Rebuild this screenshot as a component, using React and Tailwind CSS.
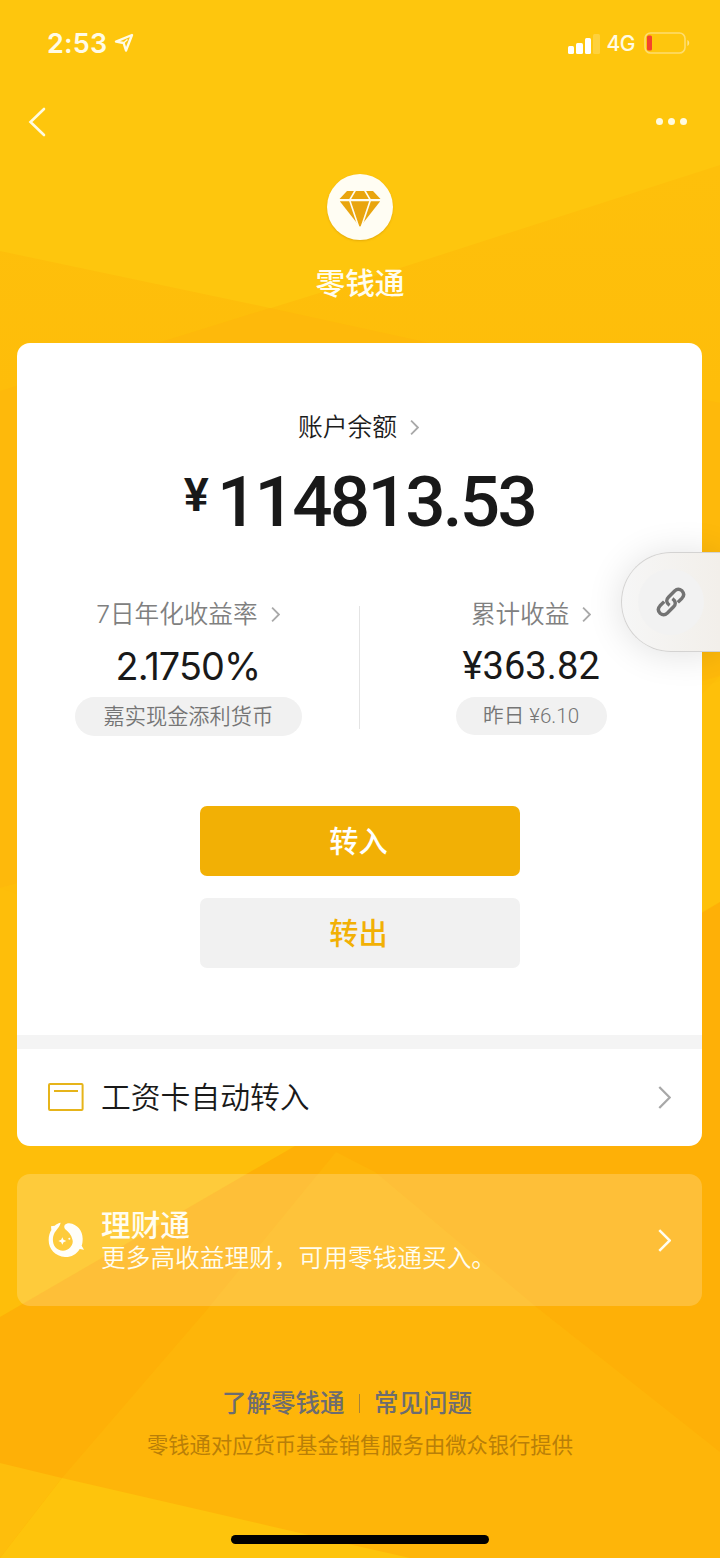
const LATIN = "font-['Inter','Noto_Sans_CJK_SC',sans-serif]";

function Chevron({ className, strokeWidth = 2 }) {
  return (
    <svg viewBox="0 0 12 22" fill="none" stroke="currentColor" strokeWidth={strokeWidth} className={className}>
      <path d="M1 1l10 10L1 21" />
    </svg>
  );
}

function Background() {
  return (
    <svg viewBox="0 0 720 1558" className="absolute inset-0 -z-10 h-full w-full">
      <defs>
        <linearGradient id="facet" gradientUnits="userSpaceOnUse" x1="0" y1="170" x2="0" y2="390">
          <stop offset="0" stopColor="#fec00b" />
          <stop offset="1" stopColor="#febd0a" />
        </linearGradient>
      </defs>
      <rect width="720" height="1558" fill="#fec60d" />
      <path d="M720 165L400 268L180 336L0 391V1558H720z" fill="url(#facet)" />
      <path d="M0 251L270 308L430 343L720 403V690L0 888z" fill="url(#facet)" />
      <path d="M270 308L430 343L720 403V676L0 888V391L180 336z" fill="#feb90b" />
      <path d="M720 676L690 706V918L720 902z" fill="#fec00a" />
      <path d="M0 888L40 902V1340H0z" fill="#febe0a" />
      <path d="M0 1317L295 1146H340V1040H0z" fill="#febe0a" />
      <path d="M720 902L640 950L295 1146L0 1317V1558H720z" fill="#feb007" />
      <path d="M336 1152L205 1312L62 1478L0 1558H720V1452L535 1306L375 1172z" fill="#feb509" />
      <path d="M0 1463L62 1478L0 1558z" fill="#febe0c" />
      <path d="M62 1478L300 1533L410 1558H0z" fill="#fec40c" />
    </svg>
  );
}

function StatusBar() {
  return (
    <div className="flex h-[86px] items-center justify-between pr-[30px] pl-[47px] text-[#fffbe6]">
      <div className="flex items-center gap-[7px]">
        <span className="text-[27px] leading-none font-semibold tracking-[0.2px]">2:53</span>
        <svg viewBox="0 0 20 20" fill="none" stroke="currentColor" strokeWidth="2.4" strokeLinejoin="round" className="h-[20px] w-[20px]">
          <path d="M18 2L2 8.6L9.6 10L12 17.5z" />
          <path d="M9.6 10L13.5 6.5" strokeWidth="1.4" />
        </svg>
      </div>
      <div className="flex items-center">
        <div className="mt-[1px] flex h-[20px] items-end gap-[2px]">
          <span className="h-[8px] w-[6.5px] rounded-[1.5px] bg-white" />
          <span className="h-[11px] w-[6.5px] rounded-[1.5px] bg-white" />
          <span className="h-[16px] w-[6.5px] rounded-[1.5px] bg-white" />
          <span className="h-[20px] w-[6.5px] rounded-[1.5px] bg-white/20" />
        </div>
        <span className="ml-[7px] text-[21px] leading-none font-medium tracking-[-0.5px]">4G</span>
        <svg viewBox="0 0 46 22" fill="none" className="ml-[9px] h-[22px] w-[46px]">
          <rect x="1" y="1" width="40" height="20" rx="5.5" stroke="#fff" strokeOpacity="0.4" strokeWidth="1.6" />
          <rect x="3" y="3.5" width="5" height="15" rx="1.5" fill="#f4432c" />
          <path d="M43.4 8v6c2.4-1 2.4-5 0-6z" fill="#fff" fillOpacity="0.5" />
        </svg>
      </div>
    </div>
  );
}

function NavBar() {
  return (
    <div className="flex h-[72px] items-center justify-between pr-[33px] pl-[28px] text-[#fffbe0]">
      <svg viewBox="0 0 18 30" fill="none" stroke="currentColor" strokeWidth="2.6" strokeLinecap="round" className="h-[30px] w-[18px]">
        <path d="M16 2L2.5 15L16 28" />
      </svg>
      <div className="mb-[1px] flex gap-[5px]">
        <span className="h-[7px] w-[7px] rounded-full bg-current" />
        <span className="h-[7px] w-[7px] rounded-full bg-current" />
        <span className="h-[7px] w-[7px] rounded-full bg-current" />
      </div>
    </div>
  );
}

function DiamondBadge() {
  return (
    <div className="h-[66px] w-[66px] rounded-full bg-[#fffdf3] shadow-[0_1px_2px_rgba(190,130,0,0.4)]">
      <svg viewBox="0 0 66 66" className="h-full w-full">
        <path d="M20 17h26l7.5 8h-41z" fill="#e9a50e" />
        <path d="M12.8 27.2h40.4L33 53z" fill="#e9a50e" />
        <path d="M28.5 16L22.6 26L32 54M37.5 16L43.4 26L34 54" fill="none" stroke="#fffdf3" strokeWidth="1.6" />
      </svg>
    </div>
  );
}

function StatColumn({ label, value, valueClass, note, noteClass }) {
  return (
    <div className="flex flex-1 flex-col items-center">
      <div className="flex h-[32px] items-center text-[24.6px] leading-none font-[350] text-[#808080]">
        <span>{label}</span>
        <Chevron className="ml-[13px] h-[15px] w-[9px] text-[#a9a9a9]" strokeWidth={2.6} />
      </div>
      <div className={`flex h-[40px] items-center leading-none text-[#191919] ${valueClass}`}>{value}</div>
      <div className={`flex items-center justify-center rounded-full bg-[#f1f1f1] pt-[1px] leading-none font-[350] text-[#757575] ${noteClass}`}>{note}</div>
    </div>
  );
}

function FloatingLink() {
  return (
    <div className="absolute top-[552px] right-0 flex h-[100px] w-[99px] items-center rounded-l-full border-y border-l border-[#d4d3d2] bg-linear-to-r from-[#f6f6f6] to-[#f2efea] shadow-[0_2px_36px_rgba(0,0,0,0.12)]">
      <div className="ml-[16px] flex h-[66px] w-[66px] items-center justify-center rounded-full bg-[#f2f2f2]">
        <svg viewBox="0 0 32 32" fill="none" stroke="#737373" strokeWidth="3.4" strokeLinecap="butt" className="h-[32px] w-[32px]">
          <path d="M14.6 19.3C10.8 16.6 11.2 13.4 13.4 11.2L19.6 5Q23.2 1.6 27 4.8Q30.4 8.6 27 12.2L22.8 16.4" />
          <path d="M17.4 12.7C21.2 15.4 20.8 18.6 18.6 20.8L12.4 27Q8.8 30.4 5 27.2Q1.6 23.4 5 19.8L9.2 15.6" />
        </svg>
      </div>
    </div>
  );
}

function BalanceCard() {
  return (
    <div className="mr-[18px] ml-[17px] h-[803px] rounded-[13px] bg-white">
      <div className="flex h-[692px] flex-col items-center pt-[69px]">
        <div className="mr-[2px] flex h-[30px] items-center text-[24.8px] leading-none text-[#1c1c1c]">
          <span className="font-[350]">账户余额</span>
          <Chevron className="ml-[13px] h-[15px] w-[9px] text-[#a9a9a9]" strokeWidth={2.6} />
        </div>
        <div className="mt-[24px] flex h-[70px] items-center font-['Roboto',sans-serif] leading-none text-[#191919]">
          <span className="mr-[8px] mb-[13px] text-[47px] font-semibold">¥</span>
          <span className="text-[71px] font-medium tracking-[-2.7px]">114813.53</span>
        </div>
        <div className="mt-[62px] flex h-[138px] w-full">
          <StatColumn
            label="7日年化收益率"
            value="2.1750%"
            valueClass="mt-[17px] text-[37.8px] tracking-[-0.9px]"
            note="嘉实现金添利货币"
            noteClass="ml-[1px] mt-[10px] h-[39px] w-[227px] text-[21.2px]"
          />
          <div className="mt-[8px] h-[123px] w-[1.5px] bg-[#e4e4e4]" />
          <StatColumn
            label="累计收益"
            value="¥363.82"
            valueClass="mt-[16px] font-['Roboto',sans-serif] text-[38px] tracking-[0.1px]"
            note="昨日 ¥6.10"
            noteClass="mt-[11px] h-[38px] w-[151px] font-['Roboto','Noto_Sans_CJK_SC',sans-serif] text-[20.6px]"
          />
        </div>
        <button className="mt-[70px] h-[70px] w-[320px] rounded-[7px] bg-[#f2b005] pt-[2px] pr-[2px] text-[29.2px] leading-none font-medium text-white">转入</button>
        <button className="mt-[22px] h-[70px] w-[320px] rounded-[7px] bg-[#f1f1f1] pt-[2px] pr-[2px] text-[29.2px] leading-none font-medium text-[#f2b005]">转出</button>
      </div>
      <div className="h-[14px] bg-[#f4f4f4]" />
      <div className="flex h-[97px] items-center pr-[31px] pl-[31px]">
        <svg viewBox="0 0 36 28" fill="none" stroke="#e6b41a" strokeWidth="2" className="mb-[2px] h-[28px] w-[36px]">
          <rect x="1" y="1" width="33.6" height="26" rx="1" />
          <path d="M6 8h24" />
        </svg>
        <span className="ml-[17px] flex-1 text-[29.8px] leading-none font-[350] text-[#191919]">工资卡自动转入</span>
        <Chevron className="h-[23px] w-[13px] text-[#a8a8a8]" strokeWidth={2.2} />
      </div>
    </div>
  );
}

function WealthCard() {
  return (
    <div className="mt-[28px] mr-[18px] ml-[17px] flex h-[132px] items-center rounded-[13px] bg-white/20 pr-[31px] pl-[31px] text-[#fffdf0]">
      <svg viewBox="0 0 108 108" fill="#fffef8" className="h-[36px] w-[36px]">
        <path d="M38 2C36 12 30 18 24 26C12 40 12 62 22 76C34 90 56 90 67 76C74 68 76 60 73 52C70 38 60 28 51 21C45 11 52 4 64 4C88 7 104 26 104 50C104 58 103 66 101 71L108 83L95 81C85 98 68 106 51 105C22 103 2 82 2 54C2 42 5 32 10 24L9 13L20 11C26 5 32 3 38 2z" />
        <path d="M43 46l3.5 7.5L55 57l-8.5 3.5L43 68l-3.5-7.5L31 57l8.5-3.5z" />
        <circle cx="64" cy="50" r="3" />
      </svg>
      <div className="ml-[17px] flex flex-1 flex-col">
        <span className="text-[29.7px] leading-[36px] font-medium">理财通</span>
        <span className="text-[24.7px] leading-[30px] font-[350]">更多高收益理财，可用零钱通买入。</span>
      </div>
      <Chevron className="h-[23px] w-[13px]" strokeWidth={2.4} />
    </div>
  );
}

function Footer() {
  return (
    <div className="flex flex-col items-center pt-[82px]">
      <div className="mr-[26px] flex h-[30px] items-center text-[24.5px] leading-none font-medium text-[#6c6c70]">
        <span>了解零钱通</span>
        <span className="mx-[14px] h-[19px] w-[1.5px] bg-[#a98439]" />
        <span>常见问题</span>
      </div>
      <p className="mt-[14px] text-[21.3px] leading-[26px] text-[#b97f08]">零钱通对应货币基金销售服务由微众银行提供</p>
      <div className="mt-[77px] h-[9px] w-[258px] rounded-full bg-black" />
    </div>
  );
}

export default function App() {
  return (
    <div className={`relative isolate h-[1558px] w-[720px] overflow-hidden ${LATIN}`}>
      <Background />
      <StatusBar />
      <NavBar />
      <div className="flex h-[185px] flex-col items-center pt-[16px]">
        <DiamondBadge />
        <h1 className="mt-[25px] text-[29.7px] leading-[36px] font-medium text-[#fffdf0]">零钱通</h1>
      </div>
      <BalanceCard />
      <WealthCard />
      <Footer />
      <FloatingLink />
    </div>
  );
}
